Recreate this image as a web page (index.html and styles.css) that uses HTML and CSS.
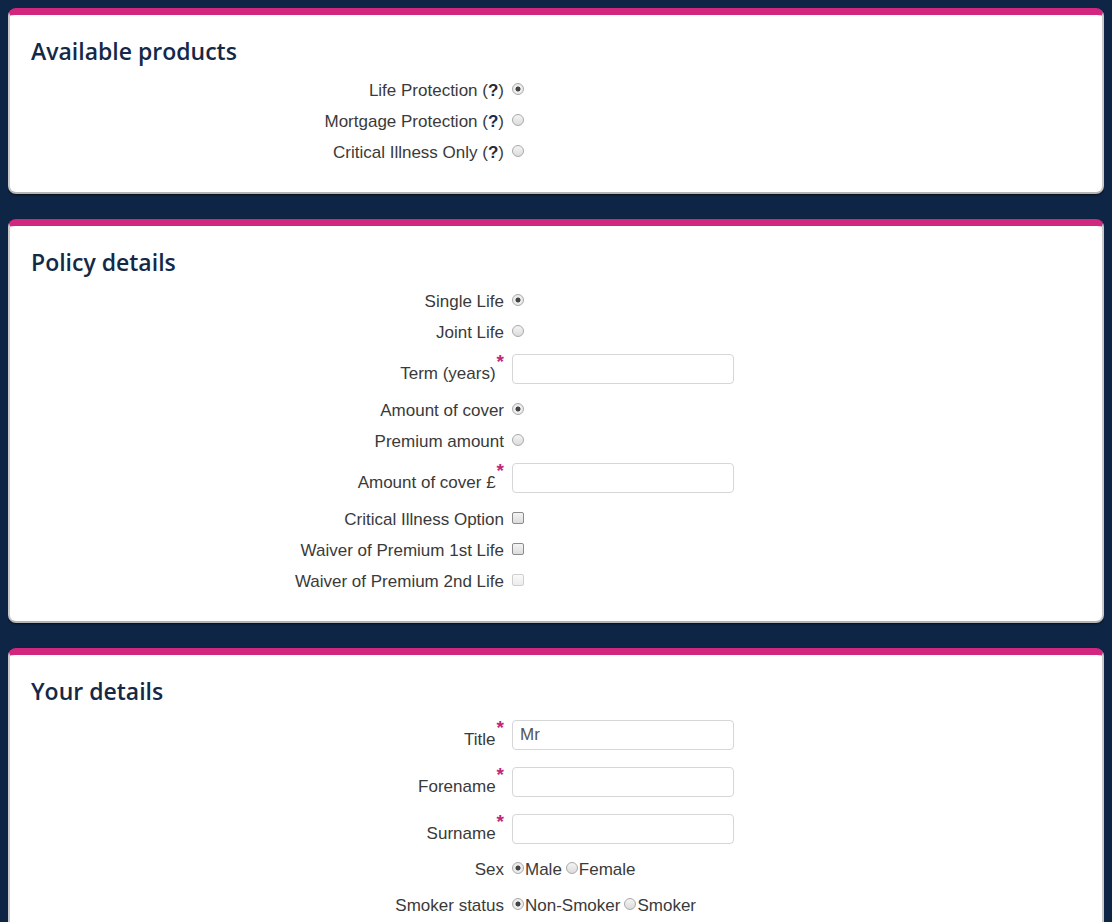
FILE: index.html
```html
<!DOCTYPE html>
<html lang="en">
<head>
    <meta charset="UTF-8">
    <meta name="viewport" content="width=device-width, initial-scale=1.0">
    <title>Get a quote</title>
    <link rel="stylesheet" href="styles.css">
</head>
<body>
    <div class="card products">
        <h2>Available products</h2>
        <div class="row">
            <label class="label">Life Protection (<b>?</b>)</label>
            <input type="radio" name="product" checked>
        </div>
        <div class="row">
            <label class="label">Mortgage Protection (<b>?</b>)</label>
            <input type="radio" name="product">
        </div>
        <div class="row">
            <label class="label">Critical Illness Only (<b>?</b>)</label>
            <input type="radio" name="product">
        </div>
    </div>

    <div class="card policy">
        <h2>Policy details</h2>
        <div class="row">
            <label class="label">Single Life</label>
            <input type="radio" name="lives" checked>
        </div>
        <div class="row">
            <label class="label">Joint Life</label>
            <input type="radio" name="lives">
        </div>
        <div class="row field">
            <label class="label">Term (years)<sup>*</sup></label>
            <input type="text" class="text">
        </div>
        <div class="row">
            <label class="label">Amount of cover</label>
            <input type="radio" name="basis" checked>
        </div>
        <div class="row">
            <label class="label">Premium amount</label>
            <input type="radio" name="basis">
        </div>
        <div class="row field">
            <label class="label">Amount of cover £<sup>*</sup></label>
            <input type="text" class="text">
        </div>
        <div class="row">
            <label class="label">Critical Illness Option</label>
            <input type="checkbox">
        </div>
        <div class="row">
            <label class="label">Waiver of Premium 1st Life</label>
            <input type="checkbox">
        </div>
        <div class="row">
            <label class="label">Waiver of Premium 2nd Life</label>
            <input type="checkbox" disabled>
        </div>
    </div>

    <div class="card details">
        <h2>Your details</h2>
        <div class="row input-row">
            <label class="label">Title<sup>*</sup></label>
            <input type="text" class="text" value="Mr">
        </div>
        <div class="row input-row">
            <label class="label">Forename<sup>*</sup></label>
            <input type="text" class="text">
        </div>
        <div class="row input-row last">
            <label class="label">Surname<sup>*</sup></label>
            <input type="text" class="text">
        </div>
        <div class="row choice">
            <label class="label">Sex</label>
            <span class="options">
                <input type="radio" name="sex" checked><span class="opt">Male</span>
                <input type="radio" name="sex"><span class="opt">Female</span>
            </span>
        </div>
        <div class="row choice">
            <label class="label">Smoker status</label>
            <span class="options">
                <input type="radio" name="smoker" checked><span class="opt">Non-Smoker</span>
                <input type="radio" name="smoker"><span class="opt">Smoker</span>
            </span>
        </div>
    </div>
</body>
</html>
```

FILE: styles.css
```css
body {
    margin: 8px;
    background: #0e2545;
    font-family: "Liberation Sans", Arial, sans-serif;
    font-size: 17px;
    color: #3a3a3a;
}

.card {
    background: #fff;
    border-top: 7px solid #d2277f;
    border-left: 2px solid #c9c9c9;
    border-right: 2px solid #c9c9c9;
    border-bottom: 2px solid #b5b5b5;
    border-radius: 8px;
    box-shadow: 0 1px 2px rgba(0, 0, 0, 0.6);
    padding: 23px 0 24px 21px;
    margin-bottom: 25px;
}

.card h2 {
    margin: 0 0 11px;
    font-family: "Open Sans", sans-serif;
    font-weight: 600;
    font-size: 23px;
    line-height: 26px;
    color: #132947;
}

.row {
    display: flex;
    align-items: center;
    height: 31px;
}

.label {
    width: 473px;
    text-align: right;
    padding-right: 8px;
    line-height: 20px;
}

.label b {
    color: #1d2b45;
}

.label sup {
    color: #c2267a;
    font-size: 19px;
    font-weight: bold;
    line-height: 0;
    position: relative;
    top: -4px;
    margin-left: 1px;
}

.row.field {
    height: 30px;
    align-items: flex-end;
    margin: 6px 0 11px;
}

.details h2 {
    margin-bottom: 16px;
}

.row.input-row {
    height: 30px;
    align-items: flex-end;
    margin-bottom: 17px;
}

.row.input-row.last {
    margin-bottom: 8px;
}

.row.choice {
    height: 36px;
}

.text {
    box-sizing: border-box;
    width: 222px;
    height: 30px;
    margin: 0;
    padding: 0 7px;
    border: 1px solid #d6d6d6;
    border-radius: 4px;
    font-family: "Liberation Sans", Arial, sans-serif;
    font-size: 17px;
    color: #555;
}

input[type="radio"],
input[type="checkbox"] {
    appearance: none;
    -webkit-appearance: none;
    width: 12px;
    height: 12px;
    margin: 0 1px 0 0;
    border: 1px solid #a9a9a9;
    background: linear-gradient(#f4f4f4, #dcdcdc);
    box-sizing: border-box;
    position: relative;
    top: -2px;
}

input[type="radio"] {
    border-radius: 50%;
}

input[type="radio"]:checked {
    background: radial-gradient(circle, #444 0 2.2px, #ececec 2.8px);
}

input[type="checkbox"] {
    border-radius: 2px;
    border-color: #8c8c8c;
}

input[type="checkbox"]:disabled {
    border-color: #cfcfcf;
    background: linear-gradient(#fafafa, #ececec);
}

.options {
    display: flex;
    align-items: center;
}

.opt {
    margin-right: 4px;
}
```
